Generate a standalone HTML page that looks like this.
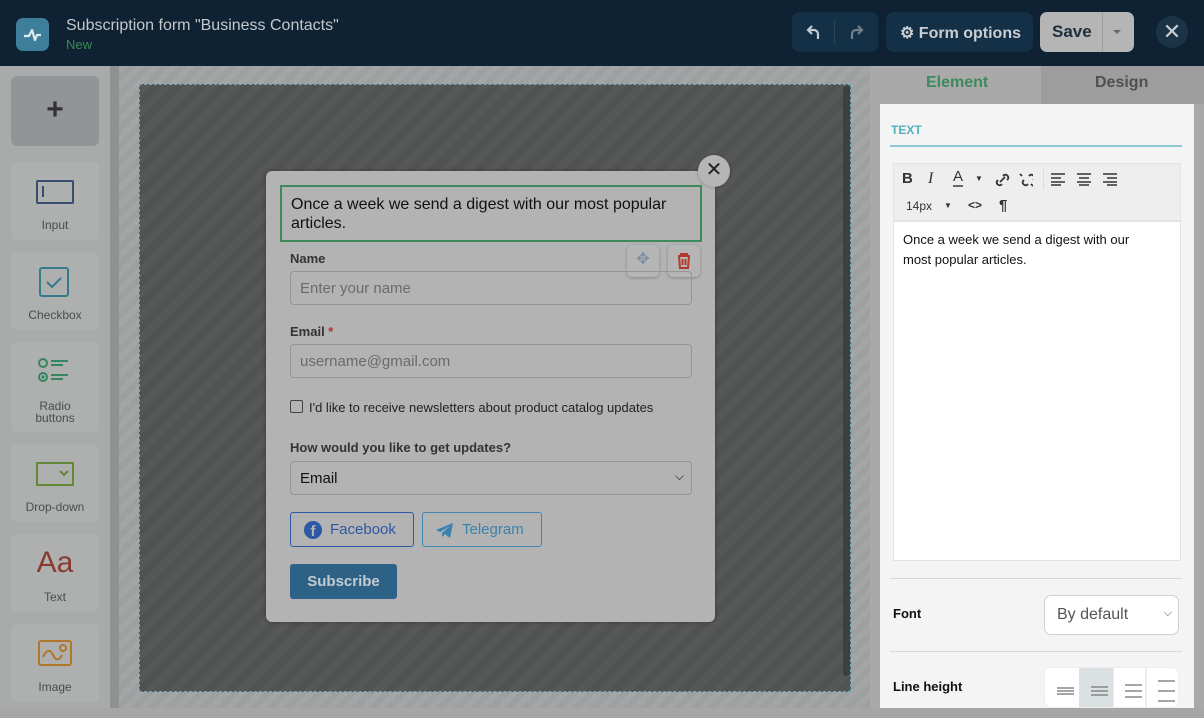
<!DOCTYPE html><html><head><style>
*{box-sizing:border-box;margin:0;padding:0}
body{width:1204px;height:718px;overflow:hidden;font-family:"Liberation Sans",sans-serif;background:#a7a8a8;position:relative}
.a{position:absolute}
.hdr{left:0;top:0;width:1204px;height:66px;background:#0e2233}
.btn{background:#143046;border-radius:8px;color:#c9ced3}
.side{left:0;top:66px;width:110px;height:652px;background:#a9aaaa}
.tile{position:absolute;left:11px;width:88px;height:78px;background:#aeafaf;border-radius:6px;text-align:center;font-size:12px;color:#4a4d50}
.tile .l{position:absolute;left:0;right:0;bottom:9px;line-height:12px}
.canvas{left:119px;top:66px;width:751px;height:642px;background:repeating-linear-gradient(135deg,#a3a5a6 0 6px,#9d9fa0 6px 12px)}
.inner{left:139px;top:84px;width:712px;height:608px;background:repeating-linear-gradient(135deg,#565757 0 8px,#515252 8px 16px);border:1px dashed #6aa9bd}
.modal{left:266px;top:171px;width:449px;height:451px;background:#b3b3b3;border-radius:6px;box-shadow:0 0 4px rgba(0,0,0,.3)}
.lbl{position:absolute;left:24px;font-size:13px;font-weight:bold;color:#333}
.inp{position:absolute;left:24px;width:402px;height:34px;border:1px solid #959595;border-radius:4px;font-size:15px;color:#6b6b6b;padding:8px 9px}
.rp{left:880px;top:104px;width:314px;height:604px;background:#f3f4f3}
</style></head><body>
<div class="a hdr"></div>
<div class="a" style="left:16px;top:18px;width:33px;height:33px;background:#3d7e9b;border-radius:7px"><svg width="33" height="33"><path d="M8 18h5l3-6 3 10 2-5h4" stroke="#dfe9ee" stroke-width="2.2" fill="none" stroke-linejoin="round"/></svg></div>
<div class="a" style="left:66px;top:17px;font-size:16px;color:#c4c8cc">Subscription form "Business Contacts"</div>
<div class="a" style="left:66px;top:37px;font-size:13px;color:#3d8a55">New</div>
<div class="a btn" style="left:792px;top:12px;width:86px;height:40px"><div class="a" style="left:42px;top:8px;width:1px;height:24px;background:#2a4458"></div>
<svg class="a" style="left:12px;top:10px" width="20" height="20"><path d="M8 4L4 8l4 4M4 8h6a4 4 0 0 1 4 4v5" fill="none" stroke="#c2c9cf" stroke-width="2.2"/></svg>
<svg class="a" style="left:54px;top:10px" width="20" height="20"><path d="M12 4l4 4-4 4M16 8h-6a4 4 0 0 0-4 4v5" fill="none" stroke="#6f7f8c" stroke-width="2.2"/></svg></div>
<div class="a btn" style="left:886px;top:12px;width:147px;height:40px;font-size:16px;font-weight:bold;padding:11px 0 0 14px">⚙ Form options</div>
<div class="a" style="left:1040px;top:12px;width:94px;height:40px;background:#b5b5b5;border-radius:7px"><div class="a" style="left:12px;top:10px;font-size:17px;font-weight:bold;color:#1d2e3c">Save</div><div class="a" style="left:62px;top:0;width:1px;height:40px;background:#9c9c9c"></div><div class="a" style="left:73px;top:18px;width:0;height:0;border-left:4px solid transparent;border-right:4px solid transparent;border-top:4px solid #667"></div></div>
<div class="a" style="left:1156px;top:16px;width:32px;height:32px;border-radius:50%;background:#1a3347;color:#c8ced3;font-size:22px;text-align:center;line-height:31px">✕</div>

<div class="a side"></div>
<div class="a" style="left:110px;top:66px;width:9px;height:642px;background:#909191"></div>
<div class="tile" style="top:76px;height:70px;background:#929497;font-size:30px;font-weight:bold;color:#333;line-height:68px">+</div>
<div class="tile" style="top:162px"><div class="a" style="left:25px;top:18px;width:38px;height:24px;border:2px solid #3a4d70;border-radius:2px"><div class="a" style="left:4px;top:4px;width:1.5px;height:11px;background:#3a4d70"></div></div><div class="l">Input</div></div>
<div class="tile" style="top:252px"><svg class="a" style="left:27px;top:14px" width="32" height="32"><rect x="2" y="2" width="28" height="28" rx="2" fill="none" stroke="#347a8a" stroke-width="2"/><path d="M9 16l5 5 9-9" fill="none" stroke="#347a8a" stroke-width="2"/></svg><div class="l">Checkbox</div></div>
<div class="tile" style="top:342px;height:90px"><svg class="a" style="left:26px;top:14px" width="40" height="30"><circle cx="6" cy="7" r="4" fill="none" stroke="#358660" stroke-width="2"/><circle cx="6" cy="21" r="4" fill="none" stroke="#358660" stroke-width="2"/><circle cx="6" cy="21" r="1.6" fill="#358660"/><path d="M14 5h17M14 9h12M14 19h17M14 23h12" stroke="#358660" stroke-width="2"/></svg><div class="l" style="bottom:8px">Radio<br>buttons</div></div>
<div class="tile" style="top:444px"><svg class="a" style="left:25px;top:18px" width="40" height="26"><rect x="1" y="1" width="36" height="22" fill="none" stroke="#628838" stroke-width="2"/><path d="M24 9l4 4 4-4" fill="none" stroke="#628838" stroke-width="2"/></svg><div class="l">Drop-down</div></div>
<div class="tile" style="top:534px"><div class="a" style="left:0;right:0;top:12px;font-size:30px;color:#8a3a30">Aa</div><div class="l">Text</div></div>
<div class="tile" style="top:624px"><svg class="a" style="left:27px;top:16px" width="36" height="28"><rect x="1" y="1" width="32" height="24" rx="2" fill="none" stroke="#b0772a" stroke-width="2"/><path d="M5 17c4-8 7-8 10-2s6 6 9 0" fill="none" stroke="#b0772a" stroke-width="2"/><circle cx="25" cy="8" r="3" fill="none" stroke="#b0772a" stroke-width="2"/></svg><div class="l">Image</div></div>

<div class="a canvas"></div>
<div class="a inner"></div>
<div class="a" style="left:843px;top:86px;width:7px;height:590px;background:#3e3f3f;border-radius:3px"></div>
<div class="a modal">
<div class="a" style="left:14px;top:14px;width:422px;height:57px;border:2px solid #3f8a5c;font-size:16px;color:#111;padding:8px 9px;line-height:19px">Once a week we send a digest with our most popular articles.</div>
<div class="lbl" style="top:80px">Name</div>
<div class="a" style="left:361px;top:74px;width:32px;height:32px;background:#b5b5b5;border-radius:5px;box-shadow:0 1px 3px rgba(0,0,0,.25);text-align:center;line-height:30px;color:#7d8da0;font-size:16px">✥</div>
<div class="a" style="left:402px;top:74px;width:32px;height:32px;background:#b5b5b5;border-radius:5px;box-shadow:0 1px 3px rgba(0,0,0,.25)"><svg width="32" height="32"><path d="M10 11h12M13 11V9h6v2M11 11l1 12h8l1-12M14.5 14v6M17.5 14v6" fill="none" stroke="#b23a2c" stroke-width="2"/></svg></div>
<div class="inp" style="top:100px">Enter your name</div>
<div class="lbl" style="top:153px">Email <span style="color:#a33">*</span></div>
<div class="inp" style="top:173px">username@gmail.com</div>
<div class="a" style="left:24px;top:229px;width:13px;height:13px;border:1px solid #444;border-radius:2px"></div>
<div class="a" style="left:43px;top:229px;font-size:13px;color:#222">I'd like to receive newsletters about product catalog updates</div>
<div class="lbl" style="top:269px">How would you like to get updates?</div>
<div class="inp" style="top:290px;color:#111">Email<span class="a" style="right:7px;top:7px;font-size:12px">⌵</span></div>
<div class="a" style="left:24px;top:341px;width:124px;height:35px;border:1px solid #2d5aa8;border-radius:3px;font-size:15px;color:#2d58a6;padding:8px 0 0 39px"><div class="a" style="left:13px;top:8px;width:18px;height:18px;border-radius:50%;background:#2d58a6;color:#b3b3b3;font-weight:bold;font-size:15px;text-align:center;line-height:21px">f</div>Facebook</div>
<div class="a" style="left:156px;top:341px;width:120px;height:35px;border:1px solid #3f88b5;border-radius:3px;font-size:15px;color:#3a82b0;padding:8px 0 0 39px"><svg class="a" style="left:12px;top:9px" width="20" height="17"><path d="M1 8L18 1l-3 15-5-4-3 3V11l8-7-10 6z" fill="#3a82b0"/></svg>Telegram</div>
<div class="a" style="left:24px;top:393px;width:107px;height:35px;background:#2d6286;border-radius:3px;font-size:15px;font-weight:bold;color:#c4ccd2;text-align:center;line-height:35px">Subscribe</div>
</div>
<div class="a" style="left:698px;top:155px;width:32px;height:32px;border-radius:50%;background:#b5b5b5;box-shadow:0 0 3px rgba(0,0,0,.3);text-align:center;line-height:31px;font-size:20px;color:#222">✕</div>

<div class="a" style="left:870px;top:66px;width:334px;height:652px;background:#a9a9a9"></div>
<div class="a" style="left:1041px;top:66px;width:163px;height:38px;background:#9d9d9d"></div>
<div class="a" style="left:926px;top:74px;font-size:16px;font-weight:bold;color:#3d8a5c">Element</div>
<div class="a" style="left:1095px;top:74px;font-size:16px;font-weight:bold;color:#505050">Design</div>
<div class="a rp">
<div class="a" style="left:11px;top:19px;font-size:12px;font-weight:bold;color:#4fb3bd">TEXT</div>
<div class="a" style="left:10px;top:41px;width:292px;height:2px;background:#8fcad2"></div>
<div class="a" style="left:13px;top:59px;width:288px;height:58px;background:#eeeeee;border:1px solid #e3e3e3"></div>
<div class="a" style="left:22px;top:66px;font-size:15px;font-weight:bold;color:#333">B</div>
<div class="a" style="left:48px;top:66px;font-size:16px;font-style:italic;font-family:'Liberation Serif',serif;color:#333">I</div>
<div class="a" style="left:73px;top:65px;font-size:15px;color:#333;border-bottom:2px solid #666;line-height:16px">A</div>
<div class="a" style="left:95px;top:70px;font-size:8px;color:#333">▼</div>
<svg class="a" style="left:113px;top:67px" width="40" height="18"><path d="M7 11l5-5M5 9l-1 1a3 3 0 0 0 4 4l1-1M10 5l1-1a3 3 0 0 1 4 4l-1 1" fill="none" stroke="#333" stroke-width="1.8"/><path d="M31 9l-1 1a3 3 0 0 0 4 4l1-1M36 5l1-1a3 3 0 0 1 4 4l-1 1M27 3l2 2M38 13l2 2" fill="none" stroke="#333" stroke-width="1.8"/></svg>
<div class="a" style="left:163px;top:64px;width:1px;height:22px;background:#ddd"></div>
<svg class="a" style="left:170px;top:68px" width="70" height="14"><path d="M1 2h14M1 6h10M1 10h14M1 13h10M27 2h14M29 6h10M27 10h14M29 13h10M53 2h14M57 6h10M53 10h14M57 13h10" stroke="#333" stroke-width="1.6"/></svg>
<div class="a" style="left:26px;top:95px;font-size:12px;color:#333">14px</div>
<div class="a" style="left:64px;top:97px;font-size:8px;color:#333">▼</div>
<div class="a" style="left:88px;top:94px;font-size:12px;font-weight:bold;color:#333">&lt;&gt;</div>
<div class="a" style="left:119px;top:93px;font-size:15px;font-weight:bold;color:#333">¶</div>
<div class="a" style="left:13px;top:117px;width:288px;height:340px;background:#fff;border:1px solid #e3e3e3;font-size:13px;line-height:20px;color:#111;padding:8px 30px 8px 9px">Once a week we send a digest with our most popular articles.</div>
<div class="a" style="left:10px;top:474px;width:292px;height:1px;background:#d7d9d8"></div>
<div class="a" style="left:13px;top:502px;font-size:13px;font-weight:bold;color:#111">Font</div>
<div class="a" style="left:164px;top:491px;width:135px;height:40px;background:#fff;border:1px solid #d0d0d0;border-radius:7px;font-size:16px;color:#555;padding:10px 12px">By default<span class="a" style="right:6px;top:11px;font-size:11px">⌵</span></div>
<div class="a" style="left:10px;top:547px;width:292px;height:1px;background:#d7d9d8"></div>
<div class="a" style="left:13px;top:575px;font-size:13px;font-weight:bold;color:#111">Line height</div>
<div class="a" style="left:164px;top:563px;width:135px;height:41px;background:#fff;border-radius:7px;overflow:hidden;border:1px solid #eee">
<div class="a" style="left:34px;top:0;width:34px;height:41px;background:#dbe0e3"></div>
<svg class="a" style="left:0;top:0" width="135" height="41"><path d="M12 20h17M12 23h17M12 26h17M46 19h17M46 23h17M46 27h17M80 17h17M80 23h17M80 29h17M113 13h17M113 23h17M113 33h17" stroke="#888" stroke-width="1.5"/><path d="M68 0v41M101 0v41" stroke="#ddd"/></svg></div>
</div>
<div class="a" style="left:0;top:708px;width:1204px;height:10px;background:#a6a6a6"></div>
</body></html>
